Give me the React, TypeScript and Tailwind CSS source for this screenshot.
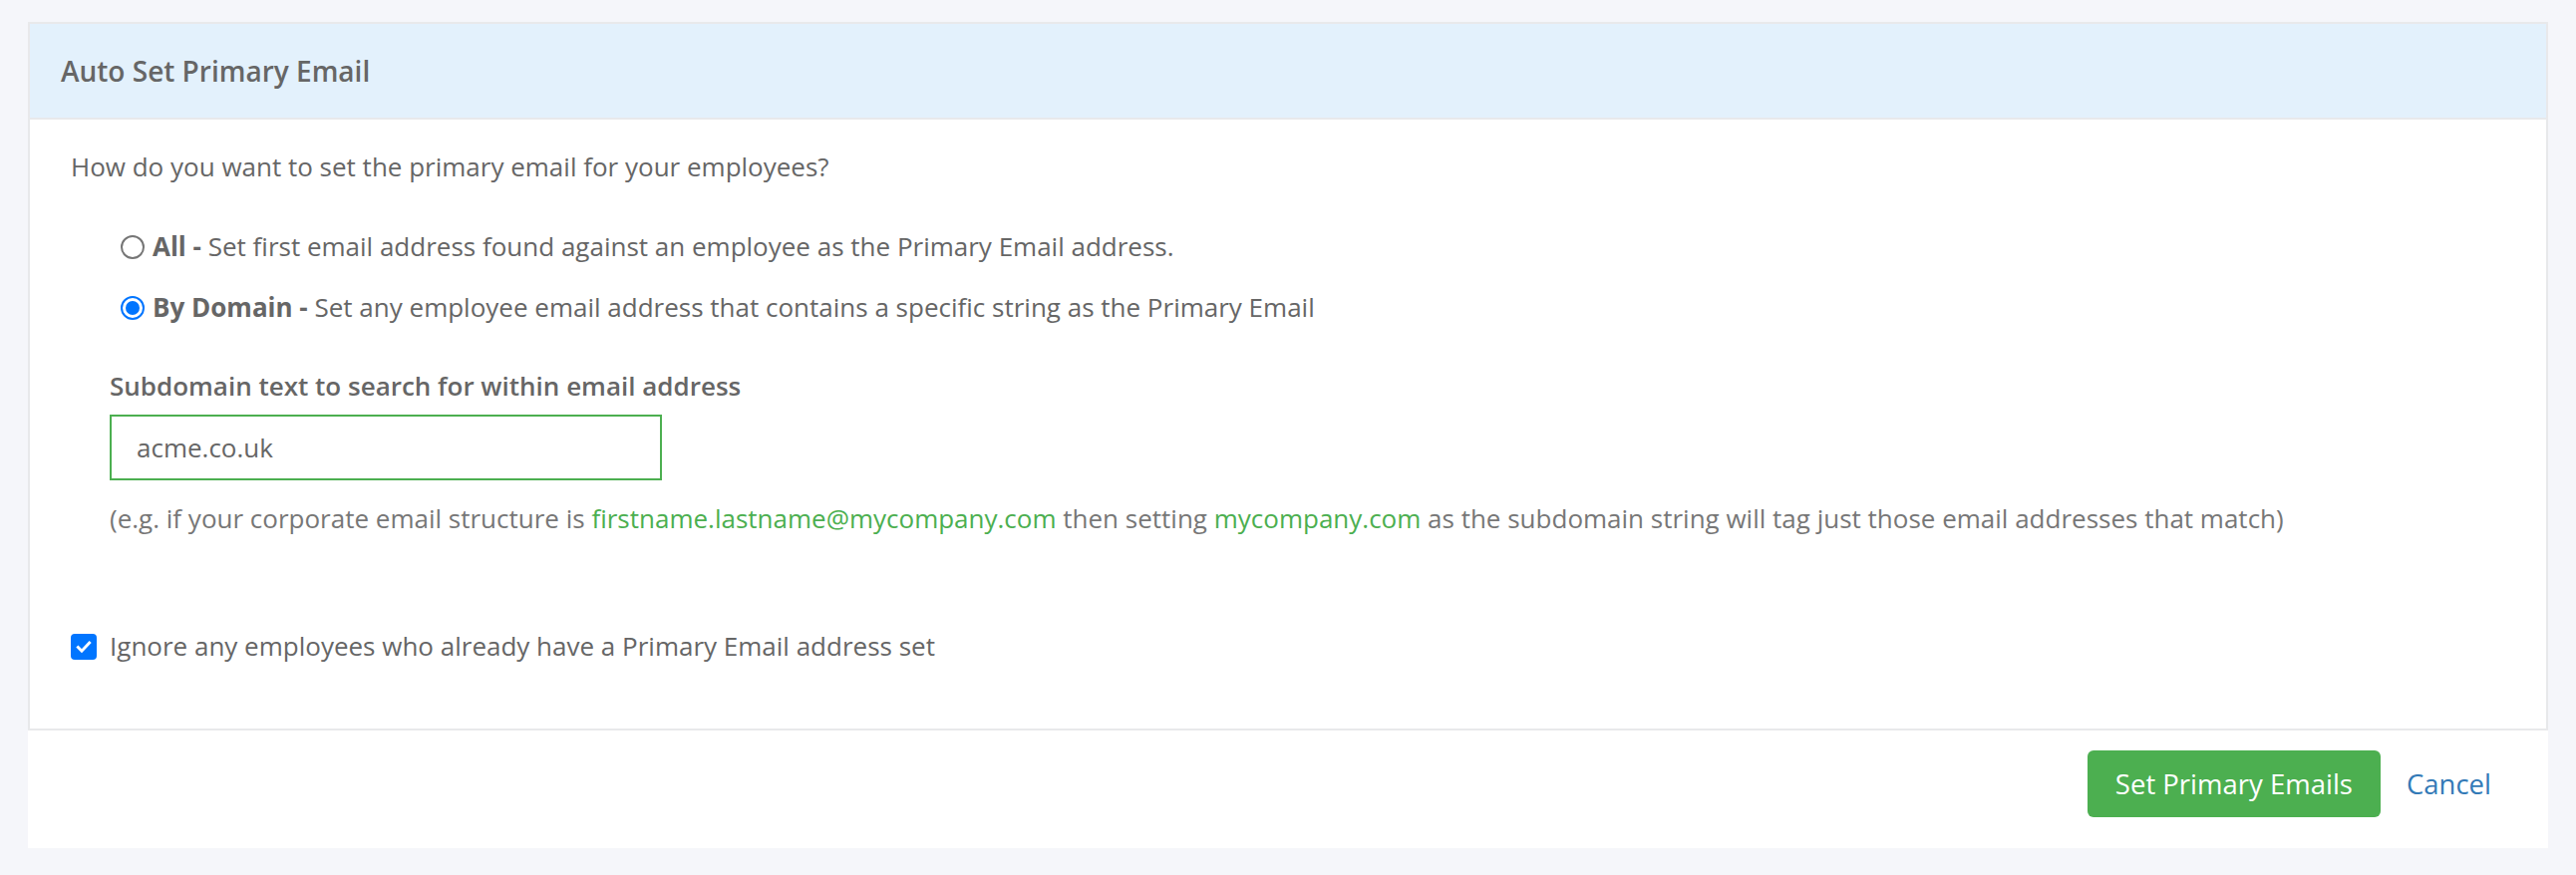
import React from 'react';

const Radio = ({ checked }: { checked?: boolean }) => (
  <span
    className={`flex h-[24px] w-[24px] shrink-0 items-center justify-center rounded-full border-2 bg-white ${
      checked ? 'border-[#0075ff]' : 'border-[#767676]'
    }`}
  >
    {checked && <span className="h-[14px] w-[14px] rounded-full bg-[#0075ff]" />}
  </span>
);

const Checkbox = () => (
  <span className="flex h-[26px] w-[26px] shrink-0 items-center justify-center rounded-[4px] bg-[#0075ff]">
    <svg width="18" height="18" viewBox="0 0 16 16" fill="none">
      <path d="M3 8.5l3.2 3.2L13 4.5" stroke="white" strokeWidth="2.6" strokeLinecap="square" />
    </svg>
  </span>
);

export default function App() {
  return (
    <div className="min-h-[878px] bg-[#f5f6fa] px-[28px] pt-[22px] font-['Open_Sans',sans-serif] text-[26px] text-[#666]">
      <div className="border-2 border-[#e8e9eb]">
        <div className="flex h-[96px] items-center border-b-2 border-[#e8e9eb] bg-[#e3f1fc] px-[31px]">
          <h1 className="text-[28px] font-semibold text-[#666]">Auto Set Primary Email</h1>
        </div>
        <div className="bg-white pt-[28px] pb-[63px] pl-[41px] leading-[39px]">
          <p>How do you want to set the primary email for your employees?</p>

          <div className="mt-[41px] ml-[50px] flex flex-col gap-[22px]">
            <label className="flex items-center gap-[8px]">
              <Radio />
              <span>
                <b className="font-bold">All -</b> Set first email address found against an employee as the Primary
                Email address.
              </span>
            </label>
            <label className="flex items-center gap-[8px]">
              <Radio checked />
              <span>
                <b className="font-bold">By Domain -</b> Set any employee email address that contains a specific string
                as the Primary Email
              </span>
            </label>
          </div>

          <div className="mt-[40px] ml-[39px]">
            <div className="font-semibold">Subdomain text to search for within email address</div>
            <input
              readOnly
              value="acme.co.uk"
              className="mt-[9px] block h-[66px] w-[554px] border-2 border-[#4caf50] px-[25px] text-[26px] text-[#666] outline-none"
            />
            <p className="mt-[19px] text-[#777]">
              (e.g. if your corporate email structure is{' '}
              <span className="text-[#4caf50]">firstname.lastname@mycompany.com</span> then setting{' '}
              <span className="text-[#4caf50]">mycompany.com</span> as the subdomain string will tag just those email
              addresses that match)
            </p>
          </div>

          <label className="mt-[89px] flex items-center gap-[13px]">
            <Checkbox />
            <span>Ignore any employees who already have a Primary Email address set</span>
          </label>
        </div>
      </div>
      <div className="flex h-[118px] items-start justify-end bg-white pt-[20px] pr-[57px]">
        <button
          type="button"
          className="h-[67px] rounded-[6px] bg-[#4caf50] px-[28px] text-[27.5px] text-white"
        >
          Set Primary Emails
        </button>
        <a href="#" className="ml-[26px] flex h-[67px] items-center text-[27.5px] text-[#337ab7]">
          Cancel
        </a>
      </div>
    </div>
  );
}
